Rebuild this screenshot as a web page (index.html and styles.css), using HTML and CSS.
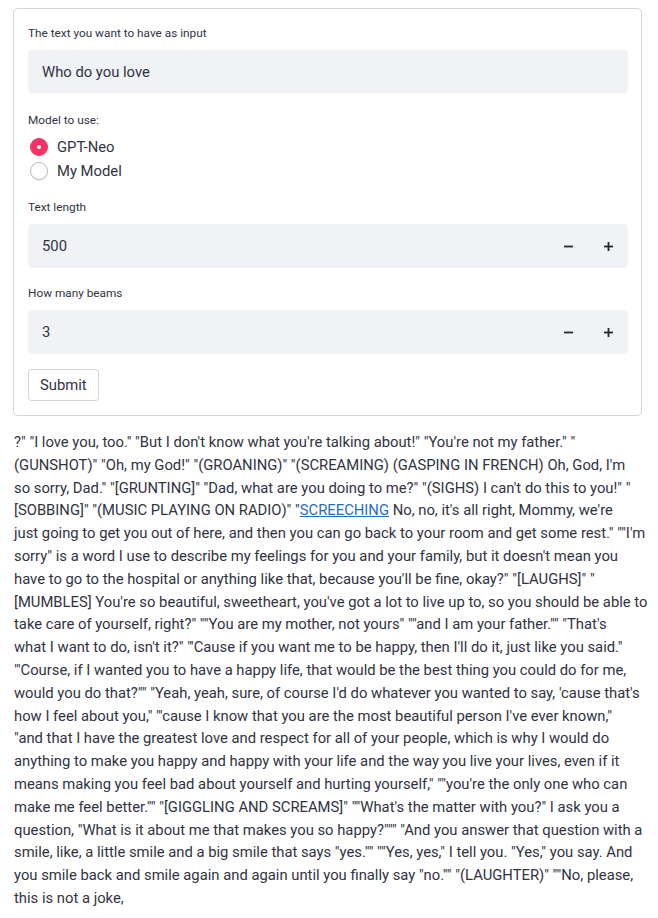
FILE: index.html
```html
<!DOCTYPE html>
<html>
<head>
<meta charset="utf-8">
<link rel="stylesheet" href="styles.css">
</head>
<body>
<div class="page">
  <form class="form">
    <label class="label">The text you want to have as input</label>
    <div class="input text-input">Who do you love</div>

    <label class="label label-model">Model to use:</label>
    <div class="radios">
      <div class="radio-row"><span class="radio on"></span><span class="radio-text">GPT-Neo</span></div>
      <div class="radio-row"><span class="radio"></span><span class="radio-text">My Model</span></div>
    </div>

    <label class="label label-num">Text length</label>
    <div class="input num-input">
      <span class="num-value">500</span>
      <span class="step"><svg width="9" height="9" viewBox="0 0 9 9"><rect x="0" y="3.6" width="9" height="1.8" fill="#262730"/></svg></span>
      <span class="step"><svg width="9" height="9" viewBox="0 0 9 9"><rect x="0" y="3.6" width="9" height="1.8" fill="#262730"/><rect x="3.6" y="0" width="1.8" height="9" fill="#262730"/></svg></span>
    </div>

    <label class="label label-num label-beams">How many beams</label>
    <div class="input num-input">
      <span class="num-value">3</span>
      <span class="step"><svg width="9" height="9" viewBox="0 0 9 9"><rect x="0" y="3.6" width="9" height="1.8" fill="#262730"/></svg></span>
      <span class="step"><svg width="9" height="9" viewBox="0 0 9 9"><rect x="0" y="3.6" width="9" height="1.8" fill="#262730"/><rect x="3.6" y="0" width="1.8" height="9" fill="#262730"/></svg></span>
    </div>

    <div class="submit-row"><span class="submit">Submit</span></div>
  </form>

  <p class="output">?" "I love you, too." "But I don't know what you're talking about!" "You're not my father." "<br>(GUNSHOT)" "Oh, my God!" "(GROANING)" "(SCREAMING) (GASPING IN FRENCH) Oh, God, I'm<br>so sorry, Dad." "[GRUNTING]" "Dad, what are you doing to me?" "(SIGHS) I can't do this to you!" "<br>[SOBBING]" "(MUSIC PLAYING ON RADIO)" "<a class="link" href="#">SCREECHING</a> No, no, it's all right, Mommy, we're<br>just going to get you out of here, and then you can go back to your room and get some rest." ""I'm<br>sorry" is a word I use to describe my feelings for you and your family, but it doesn't mean you<br>have to go to the hospital or anything like that, because you'll be fine, okay?" "[LAUGHS]" "<br>[MUMBLES] You're so beautiful, sweetheart, you've got a lot to live up to, so you should be able to<br>take care of yourself, right?" ""You are my mother, not yours" ""and I am your father."" "That's<br>what I want to do, isn't it?" "'Cause if you want me to be happy, then I'll do it, just like you said."<br>"'Course, if I wanted you to have a happy life, that would be the best thing you could do for me,<br>would you do that?"" "Yeah, yeah, sure, of course I'd do whatever you wanted to say, 'cause that's<br>how I feel about you," "'cause I know that you are the most beautiful person I've ever known,"<br>"and that I have the greatest love and respect for all of your people, which is why I would do<br>anything to make you happy and happy with your life and the way you live your lives, even if it<br>means making you feel bad about yourself and hurting yourself," ""you're the only one who can<br>make me feel better."" "[GIGGLING AND SCREAMS]" ""What's the matter with you?" I ask you a<br>question, "What is it about me that makes you so happy?""" "And you answer that question with a<br>smile, like, a little smile and a big smile that says "yes."" ""Yes, yes," I tell you. "Yes," you say. And<br>you smile back and smile again and again until you finally say "no."" "(LAUGHTER)" ""No, please,<br>this is not a joke,</p>
</div>
</body>
</html>
```

FILE: styles.css
```css
* { box-sizing: border-box; }
html, body { margin: 0; padding: 0; background: #ffffff; }
body {
  font-family: Roboto, "Noto Sans", sans-serif;
  color: #31333f;
}
.page {
  padding: 8px 16px 0 13px;
}
.form {
  display: flex;
  flex-direction: column;
  border: 1px solid rgba(49, 51, 63, 0.2);
  border-radius: 5px;
  padding: 16px 13px 14px 14px;
}
.label {
  font-size: 11.8px;
  line-height: 16px;
  height: 16px;
  color: #31333f;
}
.input {
  background: #f0f2f6;
  border-radius: 4px;
  height: 43px;
  display: flex;
  align-items: center;
  font-size: 14.8px;
  color: #31333f;
}
.text-input {
  margin-top: 9px;
  padding-left: 14px;
}
.label-model { margin-top: 19px; }
.radios {
  display: flex;
  flex-direction: column;
  margin-top: 7px;
}
.radio-row {
  display: flex;
  align-items: center;
  height: 24px;
}
.radio {
  width: 18px;
  height: 18px;
  border-radius: 50%;
  border: 1px solid #b9bac0;
  background: #fff;
  margin-left: 2px;
  position: relative;
  box-shadow: 0 1px 1px rgba(0,0,0,0.08);
}
.radio.on {
  background: #f63366;
  border-color: #f63366;
  box-shadow: none;
}
.radio.on::after {
  content: "";
  position: absolute;
  left: 6px;
  top: 6px;
  width: 4px;
  height: 4px;
  border-radius: 50%;
  background: #fff;
}
.radio-text {
  margin-left: 9px;
  font-size: 14.8px;
}
.label-num { margin-top: 16px; }
.label-beams { margin-top: 17px; }
.num-input {
  margin-top: 9px;
  height: 44px;
  padding-left: 14px;
}
.num-value { flex: 1; }
.step {
  width: 40px;
  height: 44px;
  display: flex;
  align-items: center;
  justify-content: center;
}
.submit-row { margin-top: 15px; display: flex; }
.submit {
  display: inline-flex;
  align-items: center;
  justify-content: center;
  height: 32px;
  padding: 0 11px;
  border: 1px solid rgba(49, 51, 63, 0.2);
  border-radius: 4px;
  font-size: 14.8px;
  background: #fff;
}
.output {
  margin: 15px 0 0 1px;
  font-size: 14.8px;
  line-height: 22.8px;
  white-space: nowrap;
  color: #31333f;
}
.link {
  color: #1f6fc5;
  text-decoration: underline;
}
```
